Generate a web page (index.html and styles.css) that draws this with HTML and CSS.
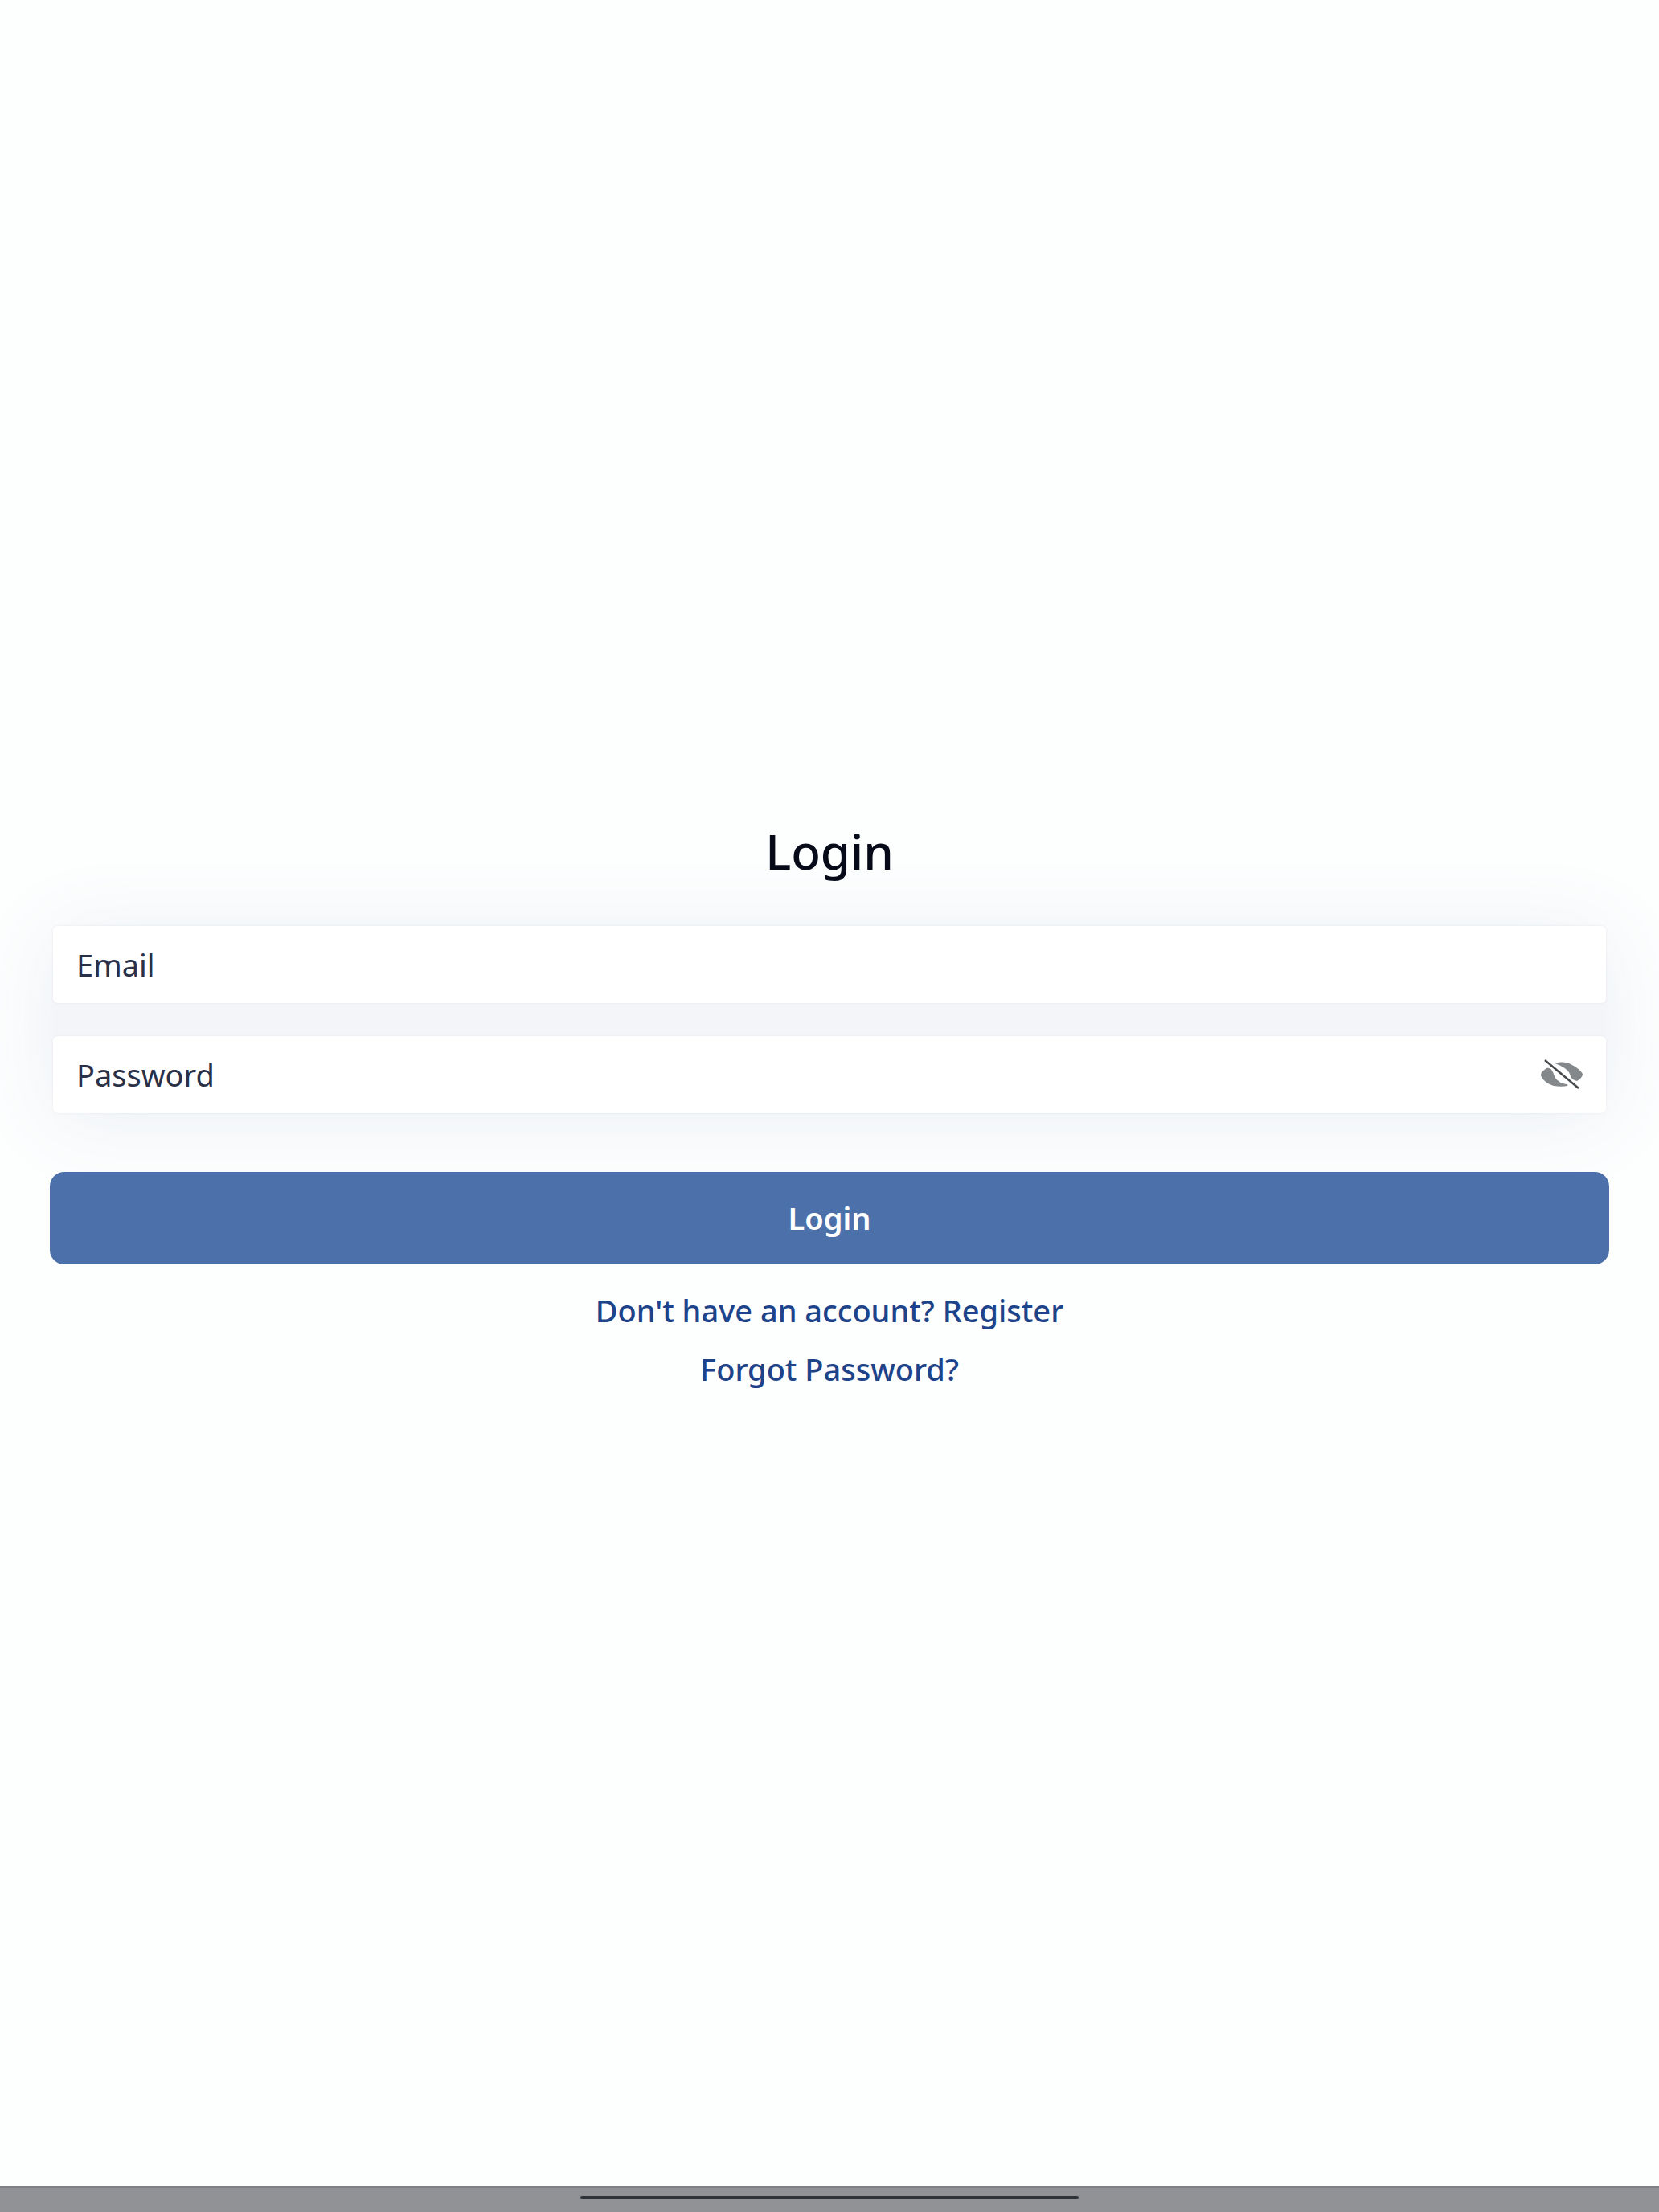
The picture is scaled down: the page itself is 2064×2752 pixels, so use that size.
FILE: index.html
```html
<!DOCTYPE html>
<html lang="en">
<head>
    <meta charset="UTF-8">
    <meta name="viewport" content="width=device-width, initial-scale=1.0">
    <title>Login</title>
    <link rel="stylesheet" href="styles.css">
</head>
<body>
    <main class="login-screen">
        <h1 class="title">Login</h1>

        <form class="login-form">
            <div class="fields">
                <div class="field">
                    <input type="email" id="email" placeholder="Email" aria-label="Email">
                </div>
                <div class="field">
                    <input type="password" id="password" placeholder="Password" aria-label="Password">
                    <button type="button" class="eye-btn" aria-label="Show password">
                        <svg class="eye-icon" viewBox="0 0 52 37">
                            <path d="M18 5C24 3 31 3 37 6C43 9 49 13 52 18C52 20 51 22 49 24L45 27C43 26 41 26 40 25C36 22 37 18 34 15C31 11 25 8 18 5Z"/>
                            <path d="M7 11L2 15C0 17 0 19 0 20C2 26 9 31 16 33C22 34 28 34 33 33C34 32 33 31 32 31C28 30 25 30 22 27C17 24 17 20 15 16C14 13 11 10 7 11Z"/>
                            <path class="slash" d="M5 1L47 36"/>
                        </svg>
                    </button>
                </div>
            </div>
            <button type="submit" class="login-btn">Login</button>
        </form>

        <nav class="links">
            <a href="#register">Don't have an account? Register</a>
            <a href="#forgot">Forgot Password?</a>
        </nav>
    </main>

    <!-- system navigation bar -->
    <footer class="nav-bar">
        <div class="handle"></div>
    </footer>

    <script>
        const password = document.getElementById('password');
        document.querySelector('.eye-btn').addEventListener('click', () => {
            password.type = password.type === 'password' ? 'text' : 'password';
        });
    </script>
</body>
</html>
```

FILE: styles.css
```css
* {
    margin: 0;
    padding: 0;
    box-sizing: border-box;
    font-family: "Noto Sans", sans-serif;
}
body {
    min-height: 100vh;
    display: flex;
    flex-direction: column;
    background: #fdfefe;
}
.login-screen {
    flex: 1;
    display: flex;
    flex-direction: column;
    justify-content: center;
    padding: 36px 62px 0;
}
.title {
    margin-bottom: 51px;
    font-size: 60px;
    font-weight: 500;
    line-height: 84px;
    text-align: center;
    color: #070a18;
}
/* form */
.login-form {
    display: flex;
    flex-direction: column;
    gap: 73px;
}
.fields {
    display: flex;
    flex-direction: column;
    gap: 41px;
    margin: 0 4px;
    border-radius: 6px;
    background: #f3f5f9;
    box-shadow: 0 8px 100px rgba(70, 100, 160, 0.1);
}
.field {
    display: flex;
    align-items: center;
    height: 96px;
    padding: 0 29px;
    border-radius: 6px;
    background: white;
    box-shadow: 0 0 3px rgba(60, 70, 90, 0.08);
}
.field input {
    flex: 1;
    min-width: 0;
    height: 100%;
    border: none;
    outline: none;
    background: transparent;
    font-size: 38px;
    color: #2a3047;
}
.field input::placeholder {
    color: #2a3047;
    opacity: 1;
}
.eye-btn {
    display: flex;
    border: none;
    background: transparent;
    cursor: pointer;
}
.eye-icon {
    width: 52px;
    height: 37px;
    fill: #85888a;
}
.eye-icon .slash {
    stroke: #46494b;
    stroke-width: 2.5;
}
.login-btn {
    height: 115px;
    border: none;
    border-radius: 18px;
    background: #4c70a9;
    color: white;
    font-size: 38px;
    font-weight: 600;
    cursor: pointer;
}
/* links */
.links {
    display: flex;
    flex-direction: column;
    align-items: center;
    margin-top: 21px;
}
.links a {
    padding: 12px 0;
    font-size: 38px;
    font-weight: 500;
    line-height: 49px;
    color: #1d438a;
    text-decoration: none;
}
/* bottom bar */
.nav-bar {
    display: flex;
    justify-content: center;
    height: 32px;
    padding-top: 10px;
    border-top: 2px solid #7d8084;
    background: #919295;
}
.handle {
    width: 30%;
    height: 4px;
    border-radius: 2px;
    background: #2f343b;
}
```
